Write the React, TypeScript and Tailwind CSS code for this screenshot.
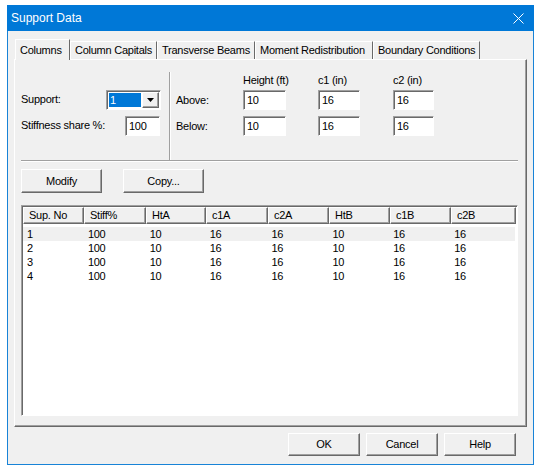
import React from 'react'

const font = { fontFamily: '"Liberation Sans", Arial, sans-serif' }

const sunken = 'border border-t-[#a0a0a0] border-l-[#a0a0a0] border-r-white border-b-white'
const raised = 'border border-t-white border-l-white border-r-[#696969] border-b-[#696969] shadow-[inset_-1px_-1px_0_#a0a0a0]'

const Field = ({ value, w = 'w-[42px]' }: { value: string; w?: string }) => (
  <div className={`${w} h-[20px] ${sunken} bg-white shadow-[inset_1px_1px_0_#696969] pl-[3px] pt-[2px] text-[11px] leading-[14px] text-black`}>
    {value}
  </div>
)

const Button = ({ label, w, h = 'h-[24px]' }: { label: string; w: string; h?: string }) => (
  <div className={`${w} ${h} ${raised} bg-[#f0f0f0] flex items-center justify-center text-[11px] text-black`}>
    {label}
  </div>
)

const tabs = [
  { label: 'Column Capitals', w: 'w-[87px]' },
  { label: 'Transverse Beams', w: 'w-[98px]' },
  { label: 'Moment Redistribution', w: 'w-[118px]' },
  { label: 'Boundary Conditions', w: 'w-[107px]' },
]

const columns = [
  { label: 'Sup. No', w: 'w-[61px]' },
  { label: 'Stiff%', w: 'w-[62px]' },
  { label: 'HtA', w: 'w-[60px]' },
  { label: 'c1A', w: 'w-[62px]' },
  { label: 'c2A', w: 'w-[61px]' },
  { label: 'HtB', w: 'w-[61px]' },
  { label: 'c1B', w: 'w-[61px]' },
  { label: 'c2B', w: 'w-[65px]' },
]

const rows = [1, 2, 3, 4].map((n) => [String(n), '100', '10', '16', '16', '10', '16', '16'])

export default function App() {
  return (
    <div className="w-[540px] h-[469px] bg-white pt-[5px] pl-[7px] whitespace-nowrap tracking-[-0.25px]" style={font}>
      <div className="w-[527px] h-[460px] border border-[#1883d7] border-t-0 bg-[#f0f0f0] flex flex-col">
        {/* title bar */}
        <div className="h-[26px] bg-[#0078d7] flex items-center justify-between pl-[4px] pr-[10px] -mx-px">
          <span className="text-[12px] text-white tracking-normal">Support Data</span>
          <svg width="11" height="11" viewBox="0 0 11 11">
            <path d="M0.5 0.5 L10.5 10.5 M10.5 0.5 L0.5 10.5" stroke="white" strokeWidth="1" />
          </svg>
        </div>

        <div className="pl-[6px] pt-[7px]">
          {/* tabs */}
          <div className="flex items-end pl-[1px] relative z-10 h-[21px]">
            <div className="w-[55px] h-[21px] -mb-px bg-[#f0f0f0] border-t border-l border-white border-r border-r-[#696969] flex items-start pt-[2px] pl-[4px] text-[11px] text-black">
              Columns
            </div>
            {tabs.map((t) => (
              <div
                key={t.label}
                className={`${t.w} h-[18px] bg-[#f0f0f0] border-t border-l border-white border-r border-r-[#696969] flex items-center pl-[4px] text-[11px] text-black overflow-hidden`}
              >
                {t.label}
              </div>
            ))}
          </div>

          {/* panel */}
          <div className="w-[513px] h-[368px] border border-t-white border-l-white border-r-[#696969] border-b-[#696969] shadow-[inset_-1px_-1px_0_#a0a0a0] pl-[6px]">
            <div className="flex h-[100px]">
              <div className="w-[148px] flex flex-col gap-[7px] pt-[30px]">
                <div className="flex items-center h-[19px]">
                  <span className="w-[85px] text-[11px] text-black">Support:</span>
                  <div className={`w-[55px] h-[20px] ${sunken} bg-white shadow-[inset_1px_1px_0_#696969] flex items-center pl-[2px] gap-[1px]`}>
                    <div className="w-[32px] h-[14px] bg-[#0078d7] text-white text-[11px] leading-[14px] pl-[1px]">1</div>
                    <div className={`w-[17px] h-[16px] ${raised} bg-[#f0f0f0] flex items-center justify-center`}>
                      <svg width="7" height="4" viewBox="0 0 7 4">
                        <path d="M0 0 H7 L3.5 4 Z" fill="black" />
                      </svg>
                    </div>
                  </div>
                </div>
                <div className="flex items-center h-[19px]">
                  <span className="w-[104px] text-[11px] text-black">Stiffness share %:</span>
                  <Field value="100" w="w-[35px]" />
                </div>
              </div>

              <div className="mt-[12px] w-[2px] border-l border-[#a0a0a0] border-r border-r-white" />

              <div className="flex flex-col pt-[12px] pl-[5px]">
                <div className="flex h-[18px] text-[11px] text-black">
                  <span className="w-[67px]" />
                  <span className="w-[75px]">Height (ft)</span>
                  <span className="w-[75px]">c1 (in)</span>
                  <span>c2 (in)</span>
                </div>
                <div className="flex flex-col gap-[6px]">
                  {['Above:', 'Below:'].map((lbl) => (
                    <div key={lbl} className="flex items-center h-[20px]">
                      <span className="w-[67px] text-[11px] text-black">{lbl}</span>
                      <div className="w-[75px]"><Field value="10" w="w-[43px]" /></div>
                      <div className="w-[75px]"><Field value="16" /></div>
                      <Field value="16" w="w-[41px]" />
                    </div>
                  ))}
                </div>
              </div>
            </div>

            <div className="w-[497px] h-[2px] border-t border-[#a0a0a0] border-b border-b-white" />

            <div className="flex gap-[21px] mt-[7px]">
              <Button label="Modify" w="w-[81px]" />
              <Button label="Copy..." w="w-[81px]" />
            </div>

            {/* list view */}
            <div className="mt-[12px] w-[497px] h-[211px] border border-t-[#a0a0a0] border-l-[#a0a0a0] border-r-white border-b-white bg-white shadow-[inset_1px_1px_0_#696969]">
              <div className="flex pl-[1px] pt-[1px]">
                {columns.map((c) => (
                  <div
                    key={c.label}
                    className={`${c.w} h-[17px] border-t border-l border-white border-r border-r-[#696969] border-b border-b-[#696969] bg-[#f0f0f0] shadow-[inset_-1px_-1px_0_#a0a0a0] pl-[5px] text-[11px] leading-[15px] text-black`}
                  >
                    {c.label}
                  </div>
                ))}
              </div>
              <div className="pt-[3px] pl-[1px] pr-[2px]">
                {rows.map((r, i) => (
                  <div key={i} className={`flex h-[14px] ${i === 0 ? 'bg-[#f0f0f0]' : ''}`}>
                    {r.map((v, j) => (
                      <div key={j} className={`${columns[j].w} pl-[4px] text-[11px] leading-[14px] text-black`}>
                        {v}
                      </div>
                    ))}
                  </div>
                ))}
              </div>
            </div>
          </div>

          {/* bottom buttons */}
          <div className="flex justify-end gap-[6px] pr-[17px] mt-[6px]">
            <Button label="OK" w="w-[72px]" h="h-[23px]" />
            <Button label="Cancel" w="w-[72px]" h="h-[23px]" />
            <Button label="Help" w="w-[72px]" h="h-[23px]" />
          </div>
        </div>
      </div>
    </div>
  )
}
